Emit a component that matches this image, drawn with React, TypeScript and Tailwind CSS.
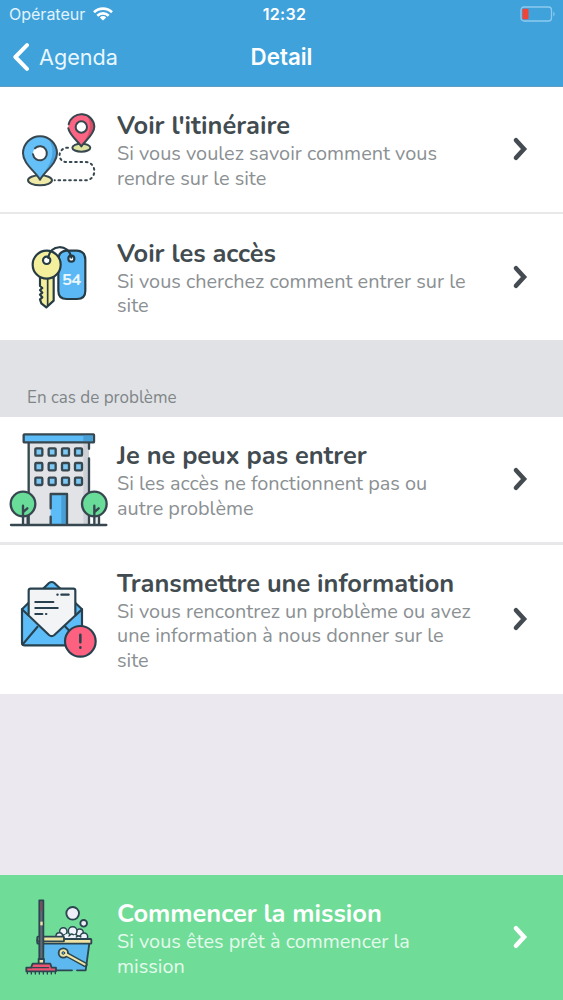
import React from 'react';

const INK = '#37474f';

function PinsIcon() {
    return (
        <svg viewBox="0 6 351 375" className="w-[117px] h-[125px]" fill="none" stroke={INK} strokeWidth="6" strokeLinecap="round" strokeLinejoin="round">
            <ellipse cx="244" cy="188" rx="27" ry="12" fill="#dfe3a0" />
            <ellipse cx="120" cy="286" rx="36" ry="15" fill="#f0eaa8" />
            <path d="M204 188 C172 188 170 231 200 231 H256 C292 231 292 286 256 286 H164" strokeDasharray="5 11" />
            <path d="M244 184 C232 167 205 148 205 125 A39 39 0 0 1 283 125 C283 148 256 167 244 184Z" fill="#fb6583" stroke="none" />
            <path d="M262 92 A39 39 0 0 1 283 125 C283 148 256 167 244 184 C258 160 282 130 262 92Z" fill="#d94f69" stroke="none" />
            <path d="M205 130 C208 149 232 167 244 184 C256 167 283 148 283 125 A39 39 0 0 0 206 118" />
            <circle cx="244" cy="126" r="17" fill="#fff" />
            <path d="M120 284 C105 258 69 236 69 205 A51 51 0 0 1 171 205 C171 236 135 258 120 284Z" fill="#66c0f8" stroke="none" />
            <path d="M146 162 A51 51 0 0 1 171 205 C171 236 135 258 120 284 C138 250 176 214 146 162Z" fill="#4ba4df" stroke="none" />
            <path d="M120 284 C105 258 69 236 69 205 A51 51 0 0 1 171 205 C171 236 135 258 120 284Z" />
            <circle cx="120" cy="205" r="21" fill="#fff" stroke="none" />
            <path d="M99 208 A21 21 0 1 0 105 190" />
        </svg>
    );
}

function KeysIcon() {
    return (
        <svg viewBox="0 6 351 378" className="w-[117px] h-[126px]" fill="none" stroke="#263b43" strokeWidth="6.5" strokeLinecap="round" strokeLinejoin="round">
            <path d="M200 116 H231 Q256 118 256 143 V236 Q256 261 231 261 H200 Q175 261 175 236 V143 Q175 118 200 116Z" fill="#5bb8f5" />
            <circle cx="214" cy="140" r="9" fill="#fff" />
            <path d="M120 196 V222 L127 228 L120 234 L127 242 L120 248 L127 256 L120 262 L124 274 L139 286 L161 266 V196Z" fill="#f3ef9c" />
            <path d="M143 200 V280" strokeWidth="5" />
            <circle cx="140" cy="158" r="42" fill="#f3ef9c" />
            <circle cx="140" cy="145" r="11" fill="#fff" />
            <path d="M145 138 C148 96 207 94 214 137" />
            <text x="186" y="218" fill="#e8f7ff" stroke="none" textLength="58" className="font-['Nunito','Lato',sans-serif] font-bold text-[50px]">54</text>
        </svg>
    );
}

const WINDOWS = [111, 155, 199].flatMap((y) => [116, 156, 196, 235].map((x) => ({ x, y })));

function BuildingIcon() {
    return (
        <svg viewBox="0 6 351 375" className="w-[117px] h-[125px]" fill="none" stroke={INK} strokeWidth="7" strokeLinecap="round" strokeLinejoin="round">
            <path d="M86 82 H267 V329 H86Z" fill="#e1e3e6" stroke="none" />
            <path d="M250 82 H267 V329 H250Z" fill="#cdd0d5" stroke="none" />
            <path d="M86 82 V329 M267 82 V101 M267 130 V329" />
            <rect x="71" y="58" width="211" height="24" rx="2" fill="#5bbcf7" />
            <path d="M250 62 H278 V78 H250Z" fill="#489fd6" stroke="none" />
            {WINDOWS.map((w) => (
                <rect key={`${w.x}-${w.y}`} x={w.x - 10} y={w.y - 11} width="21" height="22" rx="3" fill="#7cc9f6" />
            ))}
            <path d="M152 237 H201 V329 H152Z" fill="#5bbcf7" stroke="none" />
            <path d="M184 241 H198 V326 H184Z" fill="#489fd6" stroke="none" />
            <path d="M152 280 V237 H201 V329 M152 305 V329" />
            {[69, 283].map((x) => (
                <g key={x}>
                    <path d={`M${x - 2} 290 H${x + 14} V327 H${x - 2}Z`} fill="#e8eaec" stroke="none" />
                    <circle cx={x} cy="267" r="37" fill="#68dc98" />
                    <path d={`M${x} 272 V326 M${x + 14} 305 V326 M${x + 2} 290 L${x + 13} 280`} />
                </g>
            ))}
            <path d="M33 330 H319" />
        </svg>
    );
}

function MailIcon() {
    return (
        <svg viewBox="0 -60 351 447" className="w-[117px] h-[149px]" fill="none" stroke="#27414e" strokeWidth="6.5" strokeLinecap="round" strokeLinejoin="round">
            <path d="M66 133 L147 54 Q155 48 163 54 L246 133 V233 Q246 241 238 241 H74 Q66 241 66 233Z" fill="#5dbdf8" />
            <path d="M86 157 V77 Q86 71 92 71 H220 Q226 71 226 77 V157 L163 211 Q155 217 147 211Z" fill="#f2f4f6" stroke="none" />
            <path d="M66 133 L147 210 Q155 217 163 210 L246 133 M68 238 L112 186 M195 184 L214 204" />
            <path d="M86 148 V77 Q86 71 92 71 H220 Q226 71 226 77 V148" />
            <path d="M172 89 H173 M184 89 H206 M106 111 H160 M106 129 H173 M106 147 H127 M138 147 H139" />
            <circle cx="241" cy="229" r="46" fill="#fd617f" />
            <path d="M241 209 V232 M241 247 V248" strokeWidth="7.5" />
        </svg>
    );
}

function CleaningIcon() {
    return (
        <svg viewBox="0 15 351 375" className="w-[117px] h-[125px]" fill="none" stroke="#2b4650" strokeWidth="5.5" strokeLinecap="round" strokeLinejoin="round">
            <circle cx="218" cy="130" r="19" fill="#eeeef8" />
            <circle cx="251" cy="160" r="10" fill="#eeeef8" />
            {/* Foam */}
            <g fill="#f0f3fb" strokeWidth="4.5">
                <circle cx="190" cy="184" r="11" />
                <circle cx="239" cy="188" r="11" />
                <circle cx="218" cy="183" r="13" />
                <circle cx="178" cy="198" r="10" />
                <circle cx="252" cy="200" r="11" />
                <path d="M190 207 C190 190 206 188 210 199 C216 190 228 192 229 201 C236 194 244 199 243 207Z" stroke="none" />
                <path d="M207 198 Q212 189 220 194 M229 201 Q235 195 242 200" />
            </g>
            <path d="M131 218 H268 L257 301 H137Z" fill="#5db8ef" stroke="none" />
            <path d="M268 220 L257 301 H231 M216 301 H171" />
            <rect x="112" y="207" width="162" height="14" rx="2" fill="#eee3a2" />
            <rect x="112" y="200" width="80" height="14" rx="2" fill="#eee3a2" />
            <path d="M190 248 L255 284" strokeWidth="15" />
            <circle cx="190" cy="249" r="14" fill="#eee3a2" />
            <path d="M191 249 L254 283" stroke="#f1e6a5" strokeWidth="6" />
            <circle cx="190" cy="249" r="4" fill="#5db8ef" strokeWidth="3" />
            <path d="M118 222 V91 H130 V267 H118Z" fill="#606b77" />
            <path d="M121 95 H127 V122 H121Z" fill="#7f4a58" stroke="none" />
            <path d="M121 155 H128 V166 H121Z" fill="#f1e6a5" stroke="none" />
            <path d="M116 267 H132 V281 H116Z" fill="#f1e6a5" />
            <path d="M98 281 H151 L155 293 H168 V304 H79 V293 H93Z" fill="#ee5372" />
            <path d="M94 293 H146 M82 305 V311 M94 305 V312 M106 305 V312 M118 305 V312 M130 305 V312 M142 305 V312 M154 305 V312 M166 305 V311" strokeWidth="4" />
        </svg>
    );
}

interface RowProps {
    icon: React.ReactNode;
    title: string;
    lines: string[];
    className: string;
    primary?: boolean;
}

function Row({ icon, title, lines, className, primary }: RowProps) {
    return (
        <button className={`flex w-full shrink-0 items-center text-left font-['Nunito','Lato',sans-serif] ${className}`}>
            <span className="w-[117px] shrink-0">{icon}</span>
            <span className="flex-1 pt-0.5 whitespace-nowrap">
                <span className={`block text-[25.4px] leading-8 font-bold ${primary ? 'text-white' : 'text-[#414b50]'}`}>{title}</span>
                {lines.map((line) => (
                    <span key={line} className={`block text-[19.9px] leading-[24.5px] ${primary ? 'text-[#e4faec]' : 'text-[#8b9093]'}`}>
                        {line}
                    </span>
                ))}
            </span>
            <svg viewBox="0 0 16 26" className={`mr-[35px] mb-px h-[26px] w-4 shrink-0 ${primary ? 'text-white' : 'text-[#454c51]'}`} fill="none" stroke="currentColor" strokeWidth="4.6" strokeLinecap="round">
                <path d="M4 4.2 L12 13 L4 21.8" />
            </svg>
        </button>
    );
}

export default function App() {
    return (
        <div className="flex h-[1000px] w-[563px] flex-col overflow-hidden bg-[#ebe8f0]">
            {/* Header */}
            <header className="h-[87px] shrink-0 border-b border-[#5f9fc5] bg-[#3fa2db] font-['Inter',sans-serif] text-white">
                <div className="grid h-7 grid-cols-3 items-center pr-[7px] pl-[9px] text-base">
                    <div className="flex items-center gap-2">
                        <span className="text-[#e1f3fd]">Opérateur</span>
                        <svg viewBox="0 0 20 14" className="h-3.5 w-5" fill="none" stroke="#fff" strokeWidth="2.6">
                            <path d="M1 5.2 A13 13 0 0 1 19 5.2 M4.3 8.7 A8.2 8.2 0 0 1 15.7 8.7" />
                            <path d="M10 13.6 L6.8 10.4 A4.6 4.6 0 0 1 13.2 10.4Z" fill="#fff" stroke="none" />
                        </svg>
                    </div>
                    <span className="pl-1 text-center font-semibold tracking-[0.3px]">12:32</span>
                    <svg viewBox="0 0 36 16" className="h-4 w-9 justify-self-end" fill="none">
                        <rect x="1" y="1" width="30.5" height="14" rx="3" stroke="#8dcaf0" strokeWidth="1.3" />
                        <rect x="2.5" y="2.8" width="6" height="10.5" rx="1" fill="#f04438" />
                        <path d="M33.4 5.5 Q36 8 33.4 10.5Z" fill="#8dcaf0" />
                    </svg>
                </div>
                <div className="grid h-[58px] grid-cols-3 items-center px-3">
                    <div className="flex items-center gap-2.5 text-[21.6px] text-[#e8f7ff]">
                        <svg viewBox="0 0 17 28" className="h-7 w-[17px]" fill="none" stroke="#fff" strokeWidth="4" strokeLinecap="round" strokeLinejoin="round">
                            <path d="M15 2.2 L3.4 14 L15 25.8" />
                        </svg>
                        Agenda
                    </div>
                    <h1 className="text-center text-[22.3px] font-semibold">Detail</h1>
                </div>
            </header>

            <Row
                icon={<PinsIcon />}
                title="Voir l'itinéraire"
                className="h-[127px] border-b-2 border-[#e8e8ea] bg-white"
                lines={['Si vous voulez savoir comment vous', 'rendre sur le site']}
            />
            <Row
                icon={<KeysIcon />}
                title="Voir les accès"
                className="h-[126px] bg-white"
                lines={['Si vous cherchez comment entrer sur le', 'site']}
            />

            {/* Section title */}
            <div className="flex h-[77px] shrink-0 items-end bg-[#e1e2e5] pb-[7px] pl-[27px]">
                <h2 className="font-['Nunito','Lato',sans-serif] text-[17px] leading-6 text-[#7e8588]">En cas de problème</h2>
            </div>

            <Row
                icon={<BuildingIcon />}
                title="Je ne peux pas entrer"
                className="h-[128px] border-b-[3px] border-[#e8e8ea] bg-white"
                lines={['Si les accès ne fonctionnent pas ou', 'autre problème']}
            />
            <Row
                icon={<MailIcon />}
                title="Transmettre une information"
                className="h-[149px] bg-white"
                lines={['Si vous rencontrez un problème ou avez', 'une information à nous donner sur le', 'site']}
            />

            <div className="flex-1" />

            <Row
                primary
                icon={<CleaningIcon />}
                title="Commencer la mission"
                className="h-[125px] bg-[#6fdc98]"
                lines={['Si vous êtes prêt à commencer la', 'mission']}
            />
        </div>
    );
}
